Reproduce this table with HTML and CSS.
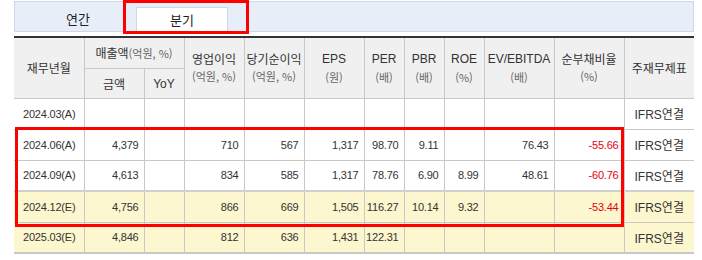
FILE: index.html
```html
<!DOCTYPE html>
<html lang="ko">
<head>
<meta charset="utf-8">
<link rel="stylesheet" href="styles.css">
</head>
<body>
<div class="wrap">
  <div class="tabs">
    <div class="tab">연간</div>
    <div class="tab active">분기</div>
  </div>
  <table class="fin">
    <colgroup>
      <col style="width:70px"><col style="width:60px"><col style="width:40px"><col style="width:60px"><col style="width:60px"><col style="width:60px"><col style="width:40px"><col style="width:40px"><col style="width:40px"><col style="width:70px"><col style="width:70px"><col style="width:70px">
    </colgroup>
    <thead>
      <tr class="h1">
        <th rowspan="2">재무년월</th>
        <th colspan="2">매출액<span class="u">(억원, %)</span></th>
        <th rowspan="2">영업이익<br><span class="u">(억원, %)</span></th>
        <th rowspan="2">당기순이익<br><span class="u">(억원, %)</span></th>
        <th rowspan="2"><span class="en">EPS</span><br><span class="u">(원)</span></th>
        <th rowspan="2"><span class="en">PER</span><br><span class="u">(배)</span></th>
        <th rowspan="2"><span class="en">PBR</span><br><span class="u">(배)</span></th>
        <th rowspan="2"><span class="en">ROE</span><br><span class="u">(%)</span></th>
        <th rowspan="2"><span class="en">EV/EBITDA</span><br><span class="u">(배)</span></th>
        <th rowspan="2">순부채비율<br><span class="u">(%)</span></th>
        <th rowspan="2">주재무제표</th>
      </tr>
      <tr class="h2">
        <th>금액</th>
        <th><span class="en">YoY</span></th>
      </tr>
    </thead>
    <tbody>
      <tr>
        <td class="d">2024.03(A)</td><td></td><td></td><td></td><td></td><td></td><td></td><td></td><td></td><td></td><td></td><td class="k">IFRS연결</td>
      </tr>
      <tr>
        <td class="d">2024.06(A)</td><td class="n">4,379</td><td></td><td class="n">710</td><td class="n">567</td><td class="n">1,317</td><td class="n">98.70</td><td class="n">9.11</td><td></td><td class="n">76.43</td><td class="n neg">-55.66</td><td class="k">IFRS연결</td>
      </tr>
      <tr class="last-a">
        <td class="d">2024.09(A)</td><td class="n">4,613</td><td></td><td class="n">834</td><td class="n">585</td><td class="n">1,317</td><td class="n">78.76</td><td class="n">6.90</td><td class="n">8.99</td><td class="n">48.61</td><td class="n neg">-60.76</td><td class="k">IFRS연결</td>
      </tr>
      <tr class="est">
        <td class="d">2024.12(E)</td><td class="n">4,756</td><td></td><td class="n">866</td><td class="n">669</td><td class="n">1,505</td><td class="n">116.27</td><td class="n">10.14</td><td class="n">9.32</td><td></td><td class="n neg">-53.44</td><td class="k">IFRS연결</td>
      </tr>
      <tr class="est">
        <td class="d">2025.03(E)</td><td class="n">4,846</td><td></td><td class="n">812</td><td class="n">636</td><td class="n">1,431</td><td class="n">122.31</td><td></td><td></td><td></td><td></td><td class="k">IFRS연결</td>
      </tr>
    </tbody>
  </table>
  <div class="mark mark-tab"></div>
  <div class="mark mark-rows"></div>
</div>
</body>
</html>
```
FILE: styles.css
```css
html, body {
  margin: 0;
  padding: 0;
  background: #fff;
}
body {
  font-family: "Noto Sans CJK KR", "Liberation Sans", sans-serif;
  font-size: 12px;
  color: #333;
}
.wrap {
  position: relative;
  padding: 1px 0 0 14px;
  width: 680px;
}
.tabs {
  display: flex;
  align-items: flex-end;
  height: 29px;
  background: #e8eef8;
  border: 1px solid #cfd8e7;
  padding-left: 17px;
  gap: 12px;
}
.tab {
  width: 92px;
  height: 24px;
  line-height: 23px;
  text-align: center;
  font-size: 13px;
  color: #222;
  box-sizing: border-box;
}
.tab.active {
  background: #fff;
  border: 1px solid #cfd8e7;
  border-bottom: none;
}
.fin {
  margin-top: 4px;
  border-collapse: collapse;
  table-layout: fixed;
  width: 680px;
  border-top: 2px solid #333;
  border-bottom: 2px solid #c8c8c8;
}
.fin th, .fin td {
  border: 1px solid #c8c8c8;
  padding: 0;
  overflow: hidden;
  white-space: nowrap;
}
.fin tr > :first-child { border-left: none; }
.fin tr > :last-child { border-right: none; }
.fin th {
  background: #f0f0f0;
  font-weight: normal;
  color: #333;
  font-size: 12px;
  line-height: 17px;
  text-align: center;
  vertical-align: middle;
}
.fin .h1 { height: 31px; }
.fin .h2 { height: 30px; }
.fin .u {
  color: #666;
  font-size: 11px;
}
.fin .en {
  font-family: "Liberation Sans", sans-serif;
  font-size: 12px;
}
.fin tbody tr { height: 31px; }
.fin td {
  font-family: "Liberation Sans", sans-serif;
  font-size: 11px;
  color: #333;
  text-align: right;
  padding-right: 5px;
}
.fin td.d {
  text-align: left;
  padding: 0 0 0 9px;
  letter-spacing: -0.2px;
}
.fin td.n { letter-spacing: -0.2px; }
.fin td.neg { color: #e60012; }
.fin td.k {
  text-align: center;
  padding: 0;
  font-size: 12px;
  font-family: "Liberation Sans", "Noto Sans CJK KR", sans-serif;
}
.fin tr.last-a td { border-bottom: 2px solid #cfcfcf; }
.fin tr.est td { background: #fcf7cf; }
.mark {
  position: absolute;
  border: 3px solid #f00;
  box-sizing: border-box;
}
.mark-tab {
  left: 123px;
  top: 0;
  width: 126px;
  height: 34px;
}
.mark-rows {
  left: 15px;
  top: 127px;
  width: 609px;
  height: 100px;
}
```
